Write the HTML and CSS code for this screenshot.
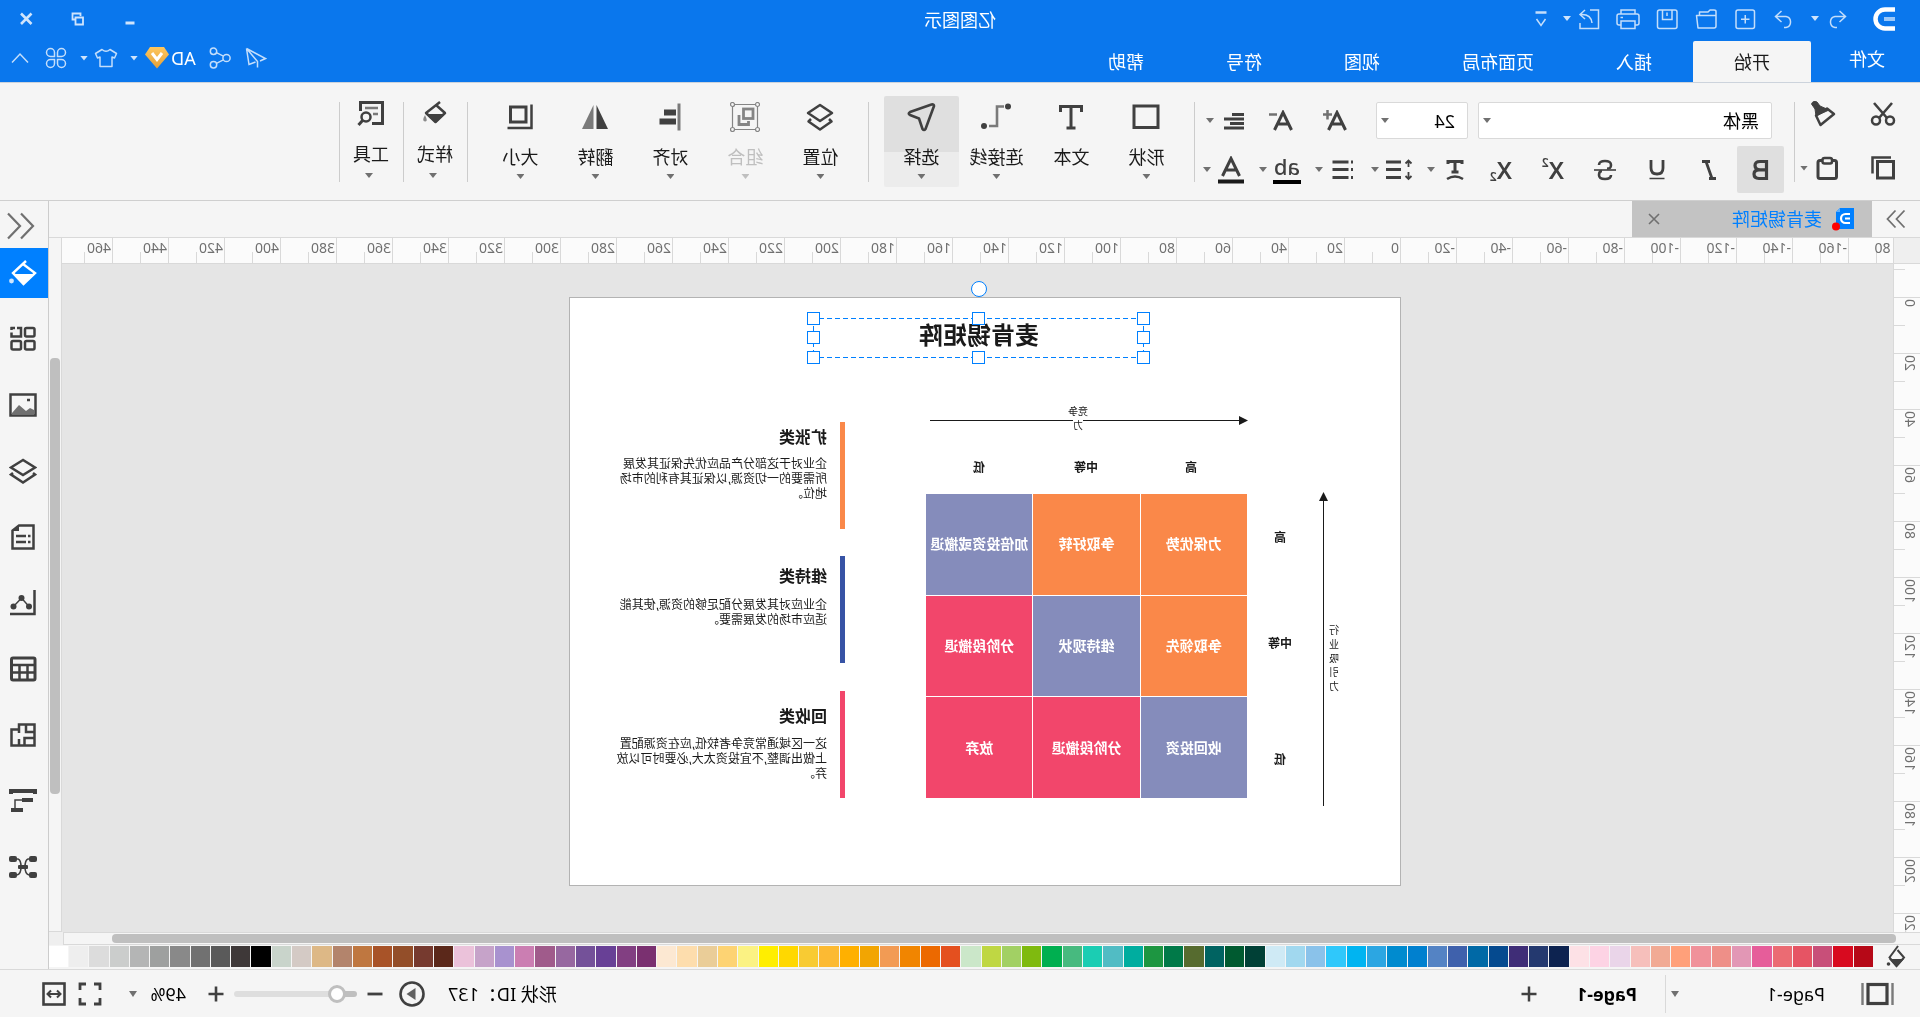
FILE: index.html
```html
<!DOCTYPE html>
<html lang="zh-CN">
<head>
<meta charset="utf-8">
<title>亿图图示</title>
<link rel="stylesheet" href="styles.css">
</head>
<body>
<div class="app">
  <header class="header">
    <div class="titlebar">
      <div class="quick">
        <svg class="logo" width="22" height="24" viewBox="0 0 22 24" fill="none" stroke="#fff" stroke-width="4.500"><path d="M0 2.500H10A9.500 9.500 0 0 1 10 21.500H0"/><path d="M0 12H11" stroke="#9cc8f8" stroke-width="4"/></svg>
        <span class="pair">
          <button class="ib" aria-label="撤销"><svg width="20" height="20" viewBox="0 0 20 20"><path d="M7.500 2 1.500 7.500 7.500 13M1.500 7.500H12A5.600 5.600 0 0 1 12 18.500H10"/></svg></button>
          <button class="caret light" aria-label="更多撤销"></button>
        </span>
        <button class="ib" aria-label="恢复"><svg width="20" height="20" viewBox="0 0 20 20"><path d="M12.500 2 18.500 7.500 12.500 13M18.500 7.500H8A5.600 5.600 0 0 0 8 18.500H10"/></svg></button>
        <button class="ib" aria-label="新建"><svg width="22" height="22" viewBox="0 0 22 22"><rect x="1.500" y="2" width="18.500" height="18.500" rx="2"/><path d="M10.750 7v8.500M6.500 11.250H15"/></svg></button>
        <button class="ib" aria-label="打开"><svg width="24" height="22" viewBox="0 0 24 22"><path d="M2 7.500H21.500L20 20H4Q2 20 2 18ZM2 7.500V3.500Q2 2 4 2H8L10 4H18.500V7.500" stroke-linejoin="round"/></svg></button>
        <button class="ib" aria-label="保存"><svg width="22" height="22" viewBox="0 0 22 22"><rect x="1" y="2" width="19.500" height="18.500" rx="2"/><path d="M6 2V11.500H15.500V2M11 4.500V8"/></svg></button>
        <button class="ib" aria-label="打印"><svg width="24" height="22" viewBox="0 0 24 22"><path d="M5 6V2H19V6M5 17H3Q1 17 1 15V8Q1 6 3 6H21Q23 6 23 8V15Q23 17 21 17H19M5 13H19V20.500H5ZM17 9.500H19.500"/></svg></button>
        <span class="pair">
          <button class="ib" aria-label="导出"><svg width="22" height="22" viewBox="0 0 22 22"><path d="M10 2H1.500V20.500H20V15M8 15Q9 6 19 6.500M15 2 20 6.500 15 11"/></svg></button>
          <button class="caret light" aria-label="更多导出"></button>
        </span>
        <button class="ib narrow" aria-label="自定义"><svg width="14" height="18" viewBox="0 0 14 18"><path d="M1.500 2.500H12.500" stroke-width="2.500"/><path d="M2.500 9 7 15.500 11.500 9"/></svg></button>
      </div>
      <h1 class="app-name">亿图图示</h1>
      <div class="window">
        <button aria-label="最小化"><svg width="14" height="14" viewBox="0 0 14 14"><path d="M2.500 11H11.500" stroke-width="3"/></svg></button>
        <button aria-label="还原"><svg width="14" height="14" viewBox="0 0 14 14"><path d="M4.500 4V1.500H12.500V7.500H10M2 5.500H9.500V12.500H2Z" stroke-width="1.800"/></svg></button>
        <button aria-label="关闭"><svg width="14" height="14" viewBox="0 0 14 14"><path d="M1.500 1.500 12 12M12 1.500 1.500 12" stroke-width="2.600"/></svg></button>
      </div>
    </div>
    <nav class="tabs">
      <button class="file">文件</button>
      <button class="active">开始</button>
      <button>插入</button>
      <button>页面布局</button>
      <button>视图</button>
      <button>符号</button>
      <button>帮助</button>
      <div class="account">
        <button class="ib" aria-label="发送"><svg width="22" height="22" viewBox="0 0 22 22"><path d="M20.500 1.500 1.500 11.500 7 14M20.500 1.500 18 17.500 11.500 15M9.500 20.500V14.500L20.500 1.500"/></svg></button>
        <button class="ib" aria-label="分享"><svg width="22" height="22" viewBox="0 0 22 22"><circle cx="4.500" cy="11" r="3.600"/><circle cx="17.500" cy="4.200" r="3.200"/><circle cx="17.500" cy="17.800" r="3.200"/><path d="M7.600 9.200 14.600 5.700M7.600 12.800 14.600 16.300"/></svg></button>
        <span class="user"><button class="ad">AD</button>
          <svg width="24" height="22" viewBox="0 0 24 22"><defs><linearGradient id="vip" x1="0" y1="0" x2="0" y2="1"><stop offset="0" stop-color="#ffc75e"/><stop offset="1" stop-color="#e2a03a"/></linearGradient></defs><path d="M5 0H19L24 7.500 12 21.500 0 7.500Z" fill="url(#vip)"/><path d="M7 6 12 12.500 17 6" fill="none" stroke="#fff" stroke-width="3"/></svg>
          <button class="caret light" aria-label="账户"></button></span>
        <span class="pair">
          <button class="ib" aria-label="主题"><svg width="24" height="20" viewBox="0 0 24 20"><path d="M8 1.500Q12 5 16 1.500L22.500 5.500 20.500 10 18 9V18.500H6V9L3.500 10 1.500 5.500Z" stroke-linejoin="round"/></svg></button>
          <button class="caret light" aria-label="更多主题"></button>
        </span>
        <button class="ib" aria-label="应用"><svg width="22" height="22" viewBox="0 0 22 22"><path d="M9.500 9.500H5.500A4 4 0 1 1 9.500 5.500ZM12.500 9.500V5.500A4 4 0 1 1 16.500 9.500ZM9.500 12.500V16.500A4 4 0 1 1 5.500 12.500ZM12.500 12.500H16.500A4 4 0 1 1 12.500 16.500Z"/></svg></button>
        <button class="ib" aria-label="收起"><svg width="18" height="12" viewBox="0 0 18 12"><path d="M1 10.500 9 2 17 10.500"/></svg></button>
      </div>
    </nav>
  </header>

  <section class="ribbon">
    <div class="clip">
      <button class="tb" aria-label="剪切"><svg width="26" height="24" viewBox="0 0 26 24"><path d="M4 1 17 16M22 1 9 16" stroke-width="2.600"/><circle cx="6" cy="18.500" r="4"/><circle cx="20" cy="18.500" r="4"/></svg></button>
      <button class="tb wide" aria-label="格式刷"><svg width="26" height="26" viewBox="0 0 26 26"><path d="M2 13 9 7.500 20 14.500 15.500 24Z" stroke-linejoin="round"/><path d="M7 9 16 5 19 1Q23-1 24.500 3L21 8 20 15Z" fill="#404040" stroke-width="1"/></svg></button>
      <button class="tb" aria-label="复制"><svg width="24" height="24" viewBox="0 0 24 24"><path d="M1.500 5.500H17.500V22H1.500Z" stroke-width="3"/><path d="M4 1.500H22.500V17.500" stroke-width="2.500"/></svg></button>
      <span class="split"><button class="tb" aria-label="粘贴"><svg width="24" height="24" viewBox="0 0 24 24"><rect x="2.500" y="4.500" width="18.500" height="18" rx="2" stroke-width="3"/><rect x="7" y="2" width="9.500" height="5.500" rx="2" fill="#f5f5f5"/></svg></button><button class="caret" aria-label="粘贴选项"></button></span>
    </div>
    <div class="fonts">
      <div class="row first">
        <select class="font-name" aria-label="字体"><option>黑体</option></select>
        <select class="font-size" aria-label="字号"><option>24</option></select>
        <button class="tb mid" aria-label="增大字号"><svg width="26" height="22" viewBox="0 0 26 22"><path d="M2.500 20 11 2.500 19.500 20M5.500 14H16.500" stroke-width="3"/><path d="M20.500 0V9.500M16 4.500H25" stroke="#707070"/></svg></button>
        <button class="tb mid" aria-label="减小字号"><svg width="26" height="22" viewBox="0 0 26 22"><path d="M2.500 20 11 2.500 19.500 20M5.500 14H16.500" stroke-width="3"/><path d="M17 4.500H25" stroke="#707070"/></svg></button>
        <span class="split"><button class="tb" aria-label="缩进"><svg width="22" height="20" viewBox="0 0 22 20"><path d="M1 3.500H13M1 8H21M1 12.500H15M1 17H21" stroke-width="3"/></svg></button><button class="caret" aria-label="缩进选项"></button></span>
      </div>
      <div class="row second">
        <button class="tb bold" aria-label="加粗"><svg width="20" height="22" viewBox="0 0 20 22"><path d="M3.500 2.500H10Q15 2.500 15 6.500T10 10.800H4H11Q16 10.800 16 15T11 19.500H3.500Z" stroke-width="3.200"/></svg></button>
        <button class="tb std" aria-label="斜体"><svg width="20" height="22" viewBox="0 0 20 22"><path d="M9 2.500H17M3 19.500H10M13 2.500 7 19.500" stroke-width="2.800"/></svg></button>
        <button class="tb std" aria-label="下划线"><svg width="20" height="22" viewBox="0 0 20 22"><path d="M4 1V9Q4 15 10 15T16 9V1" stroke-width="2.800"/><path d="M2.500 19.500H17.500" stroke-width="1.500"/></svg></button>
        <button class="tb std" aria-label="删除线"><svg width="22" height="22" viewBox="0 0 22 22"><path d="M17 6Q17 2 11 2T5 6T9 9.500M5 16Q5 20 11 20T17 16T14 12" stroke-width="2.600"/><path d="M0 11H22" stroke-width="1.600"/></svg></button>
        <button class="tb std script">X<sup>2</sup></button>
        <button class="tb std script">X<sub>2</sub></button>
        <span class="splits">
          <span class="split"><button class="tb" aria-label="文字排列"><svg width="22" height="24" viewBox="0 0 22 24"><path d="M4 6V3.500H18V6M11 3.500V14M7.500 14H14.500" stroke-width="3"/><path d="M3 21Q11 16 19 21"/></svg></button><button class="caret" aria-label="排列选项"></button></span>
          <span class="split"><button class="tb" aria-label="行距"><svg width="28" height="22" viewBox="0 0 28 22"><path d="M12 3H27M12 10.500H27M12 18.500H27" stroke-width="3"/><path d="M4.500 1.500V8M4.500 13V20M1.500 4.500 4.500 1.500 7.500 4.500M1.500 17 4.500 20 7.500 17" stroke-width="1.800"/></svg></button><button class="caret" aria-label="行距选项"></button></span>
          <span class="split"><button class="tb" aria-label="项目符号"><svg width="22" height="22" viewBox="0 0 22 22"><path d="M5.500 3H21.500M5.500 10.500H21.500M5.500 18.500H21.500M1 3H3M1 10.500H3M1 18.500H3" stroke-width="3"/></svg></button><button class="caret" aria-label="符号选项"></button></span>
          <span class="split"><button class="tb ab">ab</button><button class="caret" aria-label="突出显示选项"></button></span>
          <span class="split"><button class="tb" aria-label="字体颜色"><svg width="28" height="28" viewBox="0 0 28 28"><path d="M5.500 20 14 2.500 22.500 20M8.500 14H19.500" stroke-width="3"/><path d="M1 25.500H27" stroke="#1a1a1a" stroke-width="4"/></svg></button><button class="caret" aria-label="字体颜色选项"></button></span>
        </span>
      </div>
    </div>
    <div class="big-group">
      <button class="big"><svg width="28" height="28" viewBox="0 0 28 28"><rect x="2" y="3" width="24" height="21.500" stroke-width="3"/></svg>形状<i class="caret"></i></button>
      <button class="big"><svg width="28" height="28" viewBox="0 0 28 28"><path d="M3.500 9V3.500H24.500V9M14 4V25M9.500 25H18.500" stroke-width="3"/></svg>文本<i class="caret none"></i></button>
      <button class="big"><svg width="32" height="28" viewBox="0 0 32 28"><circle cx="4" cy="3.500" r="3" fill="#404040" stroke="none"/><circle cx="28" cy="23" r="3" fill="#404040" stroke="none"/><path d="M8 3.500H15V23H23" stroke="#7a7a7a" stroke-width="2.600"/></svg>连接线<i class="caret"></i></button>
      <button class="big chosen"><svg width="30" height="30" viewBox="0 0 30 30"><path d="M2 4Q2 2 4.500 2.500L26 10Q28.500 11.500 26 13L17 16.500 13.500 27Q12 29 10.500 27Z" stroke-width="2.600" stroke-linejoin="round"/></svg>选择<i class="caret"></i></button>
    </div>
    <div class="big-group">
      <button class="big"><svg width="28" height="28" viewBox="0 0 28 28"><path d="M14 2 26 10 14 18 2 10ZM5 16 2.500 18.500 14 26.500 25.500 18.500 23 16" stroke-linejoin="round"/></svg>位置<i class="caret"></i></button>
      <button class="big off" disabled><svg width="30" height="30" viewBox="0 0 30 30" class="grey"><path d="M2.500 2.500H27.500V27.500H2.500Z" stroke-width="1.200"/><rect x="7" y="7" width="9.500" height="9.500" stroke-width="2.800"/><path d="M21 13V22.500H11.500V19" stroke-width="2.800"/><g fill="#f5f5f5" stroke-width="1.200"><circle cx="2.500" cy="2.500" r="2"/><circle cx="27.500" cy="2.500" r="2"/><circle cx="2.500" cy="27.500" r="2"/><circle cx="27.500" cy="27.500" r="2"/></g></svg>组合<i class="caret"></i></button>
      <button class="big"><svg width="28" height="28" viewBox="0 0 28 28"><path d="M5 .5V27.500" stroke="#7a7a7a" stroke-width="3"/><path d="M8 9.500H20M8 18.500H24.500" stroke-width="6"/></svg>对齐<i class="caret"></i></button>
      <button class="big"><svg width="28" height="28" viewBox="0 0 28 28"><path d="M12.500 2V26H1Z" fill="#404040" stroke="none"/><path d="M15.500 2V26H27Z" fill="#7a7a7a" stroke="none"/></svg>翻转<i class="caret"></i></button>
      <button class="big"><svg width="28" height="28" viewBox="0 0 28 28"><rect x="8" y="4" width="15.500" height="15" stroke-width="3"/><path d="M2.500 1.500V25H26.500"/></svg>大小<i class="caret"></i></button>
    </div>
    <div class="tool-group"><button class="big"><svg width="26" height="26" viewBox="0 0 26 26"><path d="M8 2 22 13 12.500 22 3 13 12 5" stroke-linejoin="round"/><path d="M3 14H22L12.500 23Z" fill="#404040" stroke="none"/><path d="M23 15Q26.500 21 23 21.500T23 15" fill="#8a8a8a" stroke="none"/></svg>样式<i class="caret"></i></button></div>
    <div class="tool-group"><button class="big"><svg width="28" height="26" viewBox="0 0 28 26"><path d="M13 23.500H2.500V2.500H24.500V11" stroke-width="3"/><path d="M7 8H20M7 14H12" stroke="#7a7a7a"/><circle cx="19" cy="17" r="4.500"/><path d="M22 20 26.500 25" stroke-width="3"/></svg>工具<i class="caret"></i></button></div>
    <div class="tool-group"></div>
  </section>

  <main class="main">
    <div class="workspace">
      <div class="docs">
        <button class="expand" aria-label="展开"><svg width="20" height="20" viewBox="0 0 20 20"><path d="M1.500 1.500 9.500 10 1.500 18.500M10.500 1.500 18.500 10 10.500 18.500"/></svg></button>
        <div class="doc">
          <svg width="24" height="24" viewBox="0 0 24 24"><path d="M0 1H14L18 5V22H0Z" fill="#0080ff"/><path d="M14 1V5H18Z" fill="#5fb0ff"/><path d="M4 7H8.500A4.500 4.500 0 0 1 8.500 16H4M4 11.500H9" fill="none" stroke="#fff" stroke-width="2.200"/><circle cx="18" cy="19.500" r="4" fill="#f00"/></svg>
          <span>麦肯锡矩阵</span>
          <button aria-label="关闭文档"><svg width="12" height="12" viewBox="0 0 12 12"><path d="M1 1 11 11M11 1 1 11" fill="none" stroke="#707070" stroke-width="1.600"/></svg></button>
        </div>
      </div>
      <div class="desk">
        <div class="corner"></div>
        <div class="ruler-x">
          <span>-180</span><span>-160</span><span>-140</span><span>-120</span><span>-100</span><span>-80</span><span>-60</span><span>-40</span><span>-20</span><span>0</span><span>20</span><span>40</span><span>60</span><span>80</span><span>100</span><span>120</span><span>140</span><span>160</span><span>180</span><span>200</span><span>220</span><span>240</span><span>260</span><span>280</span><span>300</span><span>320</span><span>340</span><span>360</span><span>380</span><span>400</span><span>420</span><span>440</span><span>460</span>
        </div>
        <div class="scroll-y"><div class="thumb"></div></div>
        <div class="ruler-y">
          <span></span><span>0</span><span>20</span><span>40</span><span>60</span><span>80</span><span>100</span><span>120</span><span>140</span><span>160</span><span>180</span><span>200</span><span>220</span>
        </div>
        <div class="canvas">
          <div class="page">
            <svg class="lines" width="830" height="587" viewBox="0 0 830 587">
              <path d="M76.500 200V508" stroke="#1a1a1a"/><path d="M76.500 194 81 203H72Z" fill="#1a1a1a"/>
              <path d="M158 122.500H470" stroke="#1a1a1a"/><path d="M152 122.500 161 118V127Z" fill="#1a1a1a"/>
            </svg>
            <div class="label heading">麦肯锡矩阵</div>
            <div class="selection"><b class="tl"></b><b class="tc"></b><b class="tr"></b><b class="ml"></b><b class="mr"></b><b class="bl"></b><b class="bc"></b><b class="br"></b><em></em></div>
            <div class="label axis across">竞争<br><span>力</span></div>
            <div class="label axis down">行<br>业<br>吸<br>引<br>力</div>
            <div class="label level c1">高</div><div class="label level c2">中等</div><div class="label level c3">低</div>
            <div class="label level r1">高</div><div class="label level r2">中等</div><div class="label level r3">低</div>
            <div class="matrix">
              <div class="grow">力保优势</div><div class="grow">争取好转</div><div class="hold">加倍投资或撤退</div>
              <div class="grow">争取领先</div><div class="hold">维持现状</div><div class="exit">分阶段撤退</div>
              <div class="hold">收回投资</div><div class="exit">分阶段撤退</div><div class="exit">放弃</div>
            </div>
            <div class="note expand-note"><h2>扩张类</h2><p>企业对于这部分产品应优先保证其发展<br>所需要的一切资源,以保证其有利的市场<br>地位。</p></div>
            <div class="note keep-note"><h2>维持类</h2><p>企业应对其发展分配足够的资源,使其能<br>适应市场的发展需要。</p></div>
            <div class="note recover-note"><h2>回收类</h2><p>这一区域通常竞争者较低,应在资源配置<br>上做出调整,不宜投资太大,必要时可以放<br>弃。</p></div>
          </div>
        </div>
      </div>
      <div class="scroll-x"><div class="track"><div class="thumb"></div></div></div>
      <div class="palette">
        <button class="fill" aria-label="填充"><svg width="20" height="24" viewBox="0 0 20 24"><path d="M8 1 16.500 12.500 9.500 21 2 12.500 8.500 5" fill="none" stroke="#404040" stroke-width="2"/><path d="M2 14H17L9.500 22.500Z" fill="#404040"/><circle cx="17.500" cy="19" r="1.800" fill="#404040"/></svg></button>
        <div class="swatches" id="swatches"></div>
      </div>
    </div>
    <aside class="side">
      <button class="collapse" aria-label="收起面板"><svg width="28" height="28" viewBox="0 0 28 28"><path d="M14 1.500 2 14 14 26.500M27 1.500 15 14 27 26.500" stroke="#707070" stroke-width="2.200"/></svg></button>
      <button class="on" aria-label="填充样式"><svg width="28" height="28" viewBox="0 0 28 28"><path d="M11 2 24 14 13.500 25 2 14 14 5" stroke="#fff" stroke-width="2.400"/><path d="M2 15H24L13.500 25Z" fill="#fff" stroke="none"/><circle cx="25.500" cy="22" r="2.400" fill="#cfe6ff" stroke="none"/></svg></button>
      <button aria-label="符号库"><svg width="28" height="28" viewBox="0 0 28 28"><rect x="2.500" y="3" width="9.500" height="8.500" rx="1.500"/><rect x="2.500" y="16" width="9.500" height="8.500" rx="1.500"/><rect x="16" y="16" width="9.500" height="8.500" rx="1.500"/><path d="M20 3H16V11.500H25.500V7.500M22 3H26.500M25.500 2V5"/></svg></button>
      <button aria-label="图片"><svg width="28" height="28" viewBox="0 0 28 28"><rect x="1.500" y="3.500" width="25" height="21"/><path d="M3 23V19L7 17 11 20 18 14 25 22V23Z" fill="#707070" stroke="none"/><path d="M7 9H10"/></svg></button>
      <button aria-label="图层"><svg width="28" height="28" viewBox="0 0 28 28"><path d="M14 3 26 10.500 14 18 2 10.500ZM4 16 2 17.500 14 25.500 26 17.500 24 16"/></svg></button>
      <button aria-label="备注"><svg width="28" height="28" viewBox="0 0 28 28"><path d="M3.500 2.500H18L24.500 7.500V25.500H3.500Z"/><path d="M18 2V8H25Z" fill="#404040" stroke="none"/><path d="M6.500 13H9M11 13H21M6.500 19H9M11 19H21"/></svg></button>
      <button aria-label="图表"><svg width="28" height="28" viewBox="0 0 28 28"><path d="M2.500 1V25H27"/><path d="M8 17.500 15.500 9 23.500 17.500" stroke-width="1.500"/><g fill="#404040" stroke="none"><circle cx="8" cy="17.500" r="3"/><circle cx="15.500" cy="9" r="3"/><circle cx="23.500" cy="17.500" r="3"/></g></svg></button>
      <button aria-label="表格"><svg width="28" height="28" viewBox="0 0 28 28"><rect x="2" y="3" width="23.500" height="22" rx="1.500" stroke-width="3"/><path d="M2 10H25.500M2 17.500H25.500M9.500 10V25M17.500 10V25" stroke-width="2.500"/></svg></button>
      <button aria-label="平面图"><svg width="28" height="28" viewBox="0 0 28 28"><path d="M2.500 3.500H18V8.500H25.500V24.500H2.500ZM2.500 17H12.500V24M11 3V11H2.500M18 8V12M18 18V24"/></svg></button>
      <button aria-label="甘特图"><svg width="28" height="28" viewBox="0 0 28 28"><path d="M2 7V4H26V7" stroke-width="4"/><path d="M4 13H15M14 23H26" stroke-width="4"/><path d="M15 13H22V22" stroke-width="1.500"/></svg></button>
      <button aria-label="脑图"><svg width="28" height="28" viewBox="0 0 28 28"><g fill="#404040" stroke="none"><rect x="0" y="3" width="8" height="6" rx="2"/><rect x="0" y="19" width="8" height="6" rx="2"/><rect x="20" y="3" width="8" height="6" rx="2"/><rect x="20" y="19" width="8" height="6" rx="2"/><rect x="9" y="12" width="10" height="4" rx="1"/></g><path d="M7 6H9Q12 7 12 14T8 22M20 6H19Q16 7 16 14T20 22" stroke-width="1.600"/></svg></button>
    </aside>
  </main>

  <footer class="status">
    <button class="pages" aria-label="页面视图"><svg width="34" height="24" viewBox="0 0 34 24"><rect x="7" y="2.500" width="19" height="19" stroke-width="3.200"/><path d="M1.500 1V23M31.500 1V23" stroke="#7a7a7a" stroke-width="2.400"/></svg></button>
    <select class="page-select" aria-label="页面"><option>Page-1</option></select>
    <button class="page-tab">Page-1</button>
    <button class="plus" aria-label="添加页面"><svg width="16" height="16" viewBox="0 0 16 16"><path d="M8 .5V15.500M.5 8H15.500"/></svg></button>
    <span class="shape-id">形状 ID：137</span>
    <button class="play" aria-label="播放"><svg width="26" height="26" viewBox="0 0 26 26"><circle cx="13" cy="13" r="11.500" stroke-width="2.600"/><path d="M9.500 7 18.500 13 9.500 19Z" fill="#606060" stroke="none"/></svg></button>
    <button class="zoom-btn" aria-label="缩小"><svg width="16" height="16" viewBox="0 0 16 16"><path d="M.5 8H15.500" stroke-width="2.800"/></svg></button>
    <input class="zoom" type="range" min="0" max="100" value="10" aria-label="缩放">
    <button class="zoom-btn" aria-label="放大"><svg width="16" height="16" viewBox="0 0 16 16"><path d="M8 .5V15.500M.5 8H15.500" stroke-width="2.600"/></svg></button>
    <select class="percent" aria-label="缩放比例"><option>49%</option></select>
    <button class="view" aria-label="全屏"><svg width="24" height="24" viewBox="0 0 24 24"><path d="M2 8V2H8M16 2H22V8M22 16V22H16M8 22H2V16" stroke-width="2.800"/></svg></button>
    <button class="view" aria-label="适应宽度"><svg width="24" height="24" viewBox="0 0 24 24"><rect x="1.500" y="1.500" width="21" height="21" stroke-width="2.600"/><path d="M6 12H18M9 8.500 5.500 12 9 15.500M15 8.500 18.500 12 15 15.500" stroke-width="2"/></svg></button>
  </footer>
</div>
<script src="palette.js"></script>
</body>
</html>
```
FILE: styles.css
```css
* { box-sizing: border-box; }
body {
  margin: 0;
  font: 18px/24px "Noto Sans", "Noto Sans CJK SC", sans-serif;
  color: #1a1a1a;
  background: #f5f5f5;
}
/* The whole interface is shown mirrored left to right. */
.app {
  display: flex;
  flex-direction: column;
  height: 100vh;
  overflow: hidden;
  transform: scaleX(-1);
}
button, select {
  font: inherit;
  color: inherit;
  background: none;
  border: 0;
  padding: 0;
  margin: 0;
  display: inline-flex;
  align-items: center;
  justify-content: center;
  flex: none;
}
svg { display: block; flex: none; }
select { appearance: none; display: block; border-radius: 2px; }

.caret {
  width: 8px;
  height: 5px;
  background: #707070;
  clip-path: polygon(0 0, 100% 0, 50% 100%);
}
.caret.light { background: #cfe4fc; }
.caret.none { visibility: hidden; }

/* Header */
.header { background: #0a77ed; color: #fff; border-bottom: 1px solid #ccd3dc; flex: none; }
.titlebar { display: grid; grid-template-columns: 1fr auto 1fr; height: 41px; padding-bottom: 4px; align-items: center; }
.quick { display: flex; align-items: center; gap: 15px; padding-left: 25px; }
.logo { margin-right: 9px; }
.pair { display: flex; align-items: center; gap: 6px; }
.ib { width: 24px; height: 24px; }
.ib.narrow { width: 14px; }
.ib svg { fill: none; stroke: #c4defb; stroke-width: 1.5; }
.app-name { margin: 0; font-size: 18px; font-weight: 400; line-height: 24px; padding-top: 2px; }
.window { display: flex; justify-content: flex-end; }
.window button { width: 52px; height: 36px; }
.window svg { fill: none; stroke: #cfe4fc; }
.tabs { display: flex; height: 41px; align-items: stretch; }
.tabs > button { padding: 0 41px; }
.tabs > .file { width: 109px; padding: 0 3px 5px 0; }
.tabs > .active { background: #f5f5f5; color: #1a1a1a; border-radius: 2px 2px 0 0; }
.account { margin-left: auto; display: flex; align-items: center; gap: 12px; padding: 0 8px 7px 0; }
.user { display: flex; align-items: center; gap: 2px; }
.user .caret { margin-left: 5px; }

/* Ribbon */
.ribbon { display: flex; height: 118px; flex: none; border-bottom: 1px solid #cfcfcf; padding: 13px 0 0 20px; align-items: flex-start; }
.tb { width: 40px; height: 36px; color: #404040; }
.tb svg, .big svg, .side svg, .status svg, .expand svg { fill: none; stroke: #404040; stroke-width: 2.5; }
.split { display: flex; align-items: center; width: 48px; }
.clip { display: grid; grid-template-columns: 52px 53px; grid-template-rows: 36px 36px; row-gap: 18px; align-items: center; }
.clip .tb { width: 34px; }
.clip .tb.wide { width: 50px; }
.clip .split { gap: 2px; padding-left: 4px; }
.fonts, .big-group, .tool-group { position: relative; display: flex; }
.fonts::before, .big-group::before, .tool-group::before {
  content: "";
  position: absolute;
  left: 0;
  top: 6px;
  width: 1px;
  height: 80px;
  background: #cccccc;
}
.fonts { flex-direction: column; padding: 6px 10px 0 11px; gap: 7px; width: 600px; }
.row { display: flex; align-items: center; }
.first { padding-left: 12px; }
.font-name, .font-size {
  height: 37px;
  line-height: 24px;
  padding: 0 12px;
  border: 1px solid #d9d9d9;
  background: #fff url("data:image/svg+xml,%3Csvg xmlns='http://www.w3.org/2000/svg' width='8' height='5'%3E%3Cpath d='M0 0H8L4 5Z' fill='%23707070'/%3E%3C/svg%3E") no-repeat right 4px center;
  color: #000;
}
.font-name { width: 294px; margin-right: 10px; }
.font-size { width: 92px; margin-right: 14px; }
.tb.mid { width: 54px; }
.second { height: 47px; }
.tb.bold { width: 47px; height: 47px; background: #dfdfdf; border-radius: 2px; margin-right: 2px; }
.tb.std { width: 52px; }
.script { font-size: 24px; line-height: 24px; font-weight: 600; }
.script sup, .script sub { font-size: 12px; line-height: 12px; padding: 5px 0; }
.script sup { align-self: flex-start; }
.script sub { align-self: flex-end; }
.splits { display: flex; gap: 8px; }
.ab { font-size: 22px; line-height: 22px; font-weight: 500; width: 28px; height: 28px; margin: 0 6px; border-bottom: 4px solid #000; padding-bottom: 4px; }
.big-group { padding: 0 15px 0 11px; }
.big {
  flex-direction: column;
  justify-content: flex-start;
  gap: 13px;
  width: 75px;
  height: 91px;
  padding-top: 6px;
}
.big svg { height: 30px; }
.big .caret { margin-top: -8px; }
.chosen { background: linear-gradient(#dfdfdf 56px, #ececec 56px); border-radius: 2px; }
.off { color: #bfbfbf; }
.off .grey { stroke: #858585; }
.off .caret { background: #bfbfbf; }
.tool-group { width: 64px; min-height: 80px; justify-content: center; }
.tool-group .big { width: 64px; padding: 2px 0 0 2px; gap: 14px; }
.tool-group .caret { margin: -7px 0 0 4px; }

/* Document tabs */
.main { display: flex; flex: 1; min-height: 0; }
.workspace { flex: 1; min-width: 0; display: flex; flex-direction: column; }
.docs { display: flex; height: 37px; flex: none; border-bottom: 1px solid #d9d9d9; }
.expand { width: 48px; }
.expand svg { stroke: #707070; stroke-width: 1.8; }
.doc { display: flex; align-items: center; width: 240px; background: #c3c3c3; color: #0080ff; padding-left: 18px; }
.doc span { margin-left: 8px; }
.doc button { margin: 0 16px 0 auto; }

/* Rulers and canvas */
.desk { display: grid; grid-template: 26px minmax(0, 1fr) / 27px minmax(0, 1fr) 13px; flex: 1; min-height: 0; }
.corner { background: #efefef; border-right: 1px solid #d9d9d9; border-bottom: 1px solid #d9d9d9; }
.ruler-x, .ruler-y { background: #fbfbfb; color: #707070; font-size: 14px; line-height: 19px; overflow: hidden; display: flex; }
.ruler-x { border-bottom: 1px solid #d9d9d9; }
.ruler-x span {
  flex: none;
  width: 56px;
  padding-left: 2px;
  background: linear-gradient(#d9d9d9, #d9d9d9) 0 0 / 1px 100% no-repeat, linear-gradient(#d9d9d9, #d9d9d9) 28px 100% / 1px 11px no-repeat;
}
.ruler-x span:first-child { margin-left: -12px; }
.ruler-y { flex-direction: column; border-right: 1px solid #d9d9d9; }
.ruler-y span {
  flex: none;
  height: 56px;
  writing-mode: vertical-rl;
  transform: rotate(180deg);
  text-align: right;
  padding: 0 0 2px;
  background: linear-gradient(#d9d9d9, #d9d9d9) 0 100% / 100% 1px no-repeat, linear-gradient(#d9d9d9, #d9d9d9) 0 27px / 11px 1px no-repeat;
}
.ruler-y span:first-child { margin-top: -23px; }
.scroll-y { grid-column: 3; grid-row: 1 / 3; border-left: 1px solid #d9d9d9; border-bottom: 1px solid #d9d9d9; padding: 120px 1px 137px; }
.thumb { background: #bfbfbf; border-radius: 4px; height: 100%; }
.canvas { background: #e5e5e5; overflow: hidden; padding: 33px 0 0 492px; }
.page { position: relative; width: 832px; height: 589px; background: #fff; border: 1px solid #b3b3b3; }
.lines { position: absolute; left: 0; top: 0; }
.label { position: absolute; text-align: center; white-space: nowrap; transform: translate(-50%, -50%); }
.heading { left: 421px; top: 37px; font-size: 24px; line-height: 32px; font-weight: 700; }
.axis { font-size: 10px; line-height: 14px; }
.across { left: 322px; top: 120px; }
.across span { background: #fff; }
.down { left: 66px; top: 360px; }
.level { font-size: 12px; line-height: 16px; font-weight: 700; }
.c1 { left: 209px; top: 170px; }
.c2 { left: 314px; top: 170px; }
.c3 { left: 421px; top: 170px; }
.r1 { left: 120px; top: 240px; }
.r2 { left: 120px; top: 346px; }
.r3 { left: 120px; top: 462px; }
.matrix {
  position: absolute;
  left: 153px;
  top: 196px;
  width: 321px;
  height: 304px;
  display: grid;
  grid-template: repeat(3, 1fr) / repeat(3, 1fr);
  gap: 1px;
  font-size: 14px;
  font-weight: 700;
  color: #fff;
}
.matrix div { display: flex; align-items: center; justify-content: center; white-space: nowrap; }
.grow { background: #fa8849; }
.hold { background: #858cbb; }
.exit { background: #f2466b; }
.note { position: absolute; left: 555px; width: 240px; height: 107px; border-left: 5px solid; padding-left: 13px; white-space: nowrap; }
.note h2 { margin: 0; font-size: 16px; line-height: 24px; color: #1a1a1a; }
.note p { margin: 0; font-size: 12px; line-height: 15px; color: #1a1a1a; }
.expand-note { top: 124px; border-color: #fa8849; padding-top: 3px; }
.expand-note p { padding-top: 7px; }
.keep-note { top: 258px; border-color: #3753a5; padding-top: 8px; }
.keep-note p { padding-top: 9px; }
.recover-note { top: 393px; border-color: #f2466b; padding-top: 13px; }
.recover-note p { padding-top: 8px; }
.selection { position: absolute; left: 256px; top: 20px; width: 331px; height: 40px; color: #0080ff;
  background:
    repeating-linear-gradient(90deg, #0080ff 0 5px, transparent 5px 8px) 0 0 / 100% 1px no-repeat,
    repeating-linear-gradient(90deg, #0080ff 0 5px, transparent 5px 8px) 0 100% / 100% 1px no-repeat,
    repeating-linear-gradient(#0080ff 0 5px, transparent 5px 8px) 0 0 / 1px 100% no-repeat,
    repeating-linear-gradient(#0080ff 0 5px, transparent 5px 8px) 100% 0 / 1px 100% no-repeat;
}
.selection b, .selection em { position: absolute; width: 13px; height: 13px; margin: -6px; background: #fff; border: 1px solid #0080ff; }
.tl, .tc, .tr { top: 0; }
.ml, .mr { top: 19px; }
.bl, .bc, .br { top: 39px; }
.tl, .ml, .bl { left: 0; }
.tc, .bc { left: 165px; }
.tr, .mr, .br { left: 330px; }
.selection em { width: 16px; height: 16px; margin: -8px; left: 165px; top: -29px; border-radius: 50%; }

.scroll-x { height: 13px; flex: none; background: #efefef; padding-right: 14px; }
.track { height: 13px; background: #f5f5f5; border: 1px solid #d9d9d9; border-left: 0; padding: 1px 48px 1px 24px; }

/* Colour strip */
.palette { display: flex; height: 24px; flex: none; padding-top: 1px; }
.fill { width: 47px; height: 22px; }
.swatches { display: flex; flex: 1; gap: 1px; height: 21px; }
.swatches span { flex: 1; }

/* Right-hand tool strip */
.side { width: 49px; border-left: 1px solid #cccccc; display: flex; flex-direction: column; flex: none; }
.side button { height: 50px; margin-bottom: 16px; width: 48px; padding-left: 2px; }
.side .collapse { height: 47px; margin: 0; padding: 2px 0 0 6px; }
.side .on { background: #0080ff; }

/* Status bar */
.status { display: flex; align-items: center; height: 48px; flex: none; border-top: 1px solid #d9d9d9; padding: 1px 42px 0 26px; color: #000; }
.page-select, .percent {
  background: url("data:image/svg+xml,%3Csvg xmlns='http://www.w3.org/2000/svg' width='8' height='6'%3E%3Cpath d='M0 0H8L4 6Z' fill='%23707070'/%3E%3C/svg%3E") no-repeat right 5px center;
}
.page-select { width: 165px; height: 38px; margin-left: 30px; padding-left: 5px; border-right: 1px solid #d9d9d9; border-radius: 0; }
.page-tab { font-weight: 700; margin: 0 40px 0 28px; }
.shape-id { margin-left: auto; white-space: nowrap; }
.play { margin: 0 16px 0 23px; }
.zoom { appearance: none; width: 123px; height: 18px; margin: 0 10px; background: none; }
.zoom::-webkit-slider-runnable-track { height: 6px; border-radius: 3px; background: linear-gradient(90deg, #bfbfbf 14px, #dedede 14px); }
.zoom::-webkit-slider-thumb { appearance: none; width: 18px; height: 18px; margin-top: -6px; border-radius: 50%; border: 3px solid #bfbfbf; background: #fff; }
.percent { width: 62px; margin: 0 22px; }
.view + .view { margin-left: 12px; }
```
FILE: palette.js
```js
// Colours of the quick palette, from the fill button outwards.
const colours = `b60817 d80a1f c84f79 e65464 eb6b73 e65d9a e297b5 ee8f88 f0919a ffa07a f1aa94 f6bfbb ead5e9 fdd3e4 fde1e6
0d2350 24396f 3f2d77 054a8f 0069a6 3f61ac 5483c4 0080cf 008bcf 2ca6e2 00b4f1 2fc8fb 8ac2ea a1d8ef cfeaf5
004036 005a30 006361 566b2f 007948 1d9641 00ad9f 51bcc4 1bcdb3 47ba7f 00af50 7fba0f a2d064 bfd743 cbe7c9
e4501f ec6900 f18500 f29b54 f2a502 ffb000 fcba33 f8cb33 ffd800 ffee00 fbf283 fdd373 eacd98 fdddad fce8d2
7a3070 823f82 684096 745199 9768a0 a05b8b cb7eb2 a892cf c6a3c9 ebc2da
5b281a 763a2f 934e29 a85328 bf7740 b3846c ddb886 d4cac5 c9d4cb
000000 3e3838 5a5a5a 717171 898989 9ea09f b4b5b5 cbcdcc dcdcdc eeeeee ffffff`.split(/\s+/);
const strip = document.getElementById("swatches");
for (const colour of colours) {
  const swatch = document.createElement("span");
  swatch.style.background = "#" + colour;
  strip.append(swatch);
}
```
